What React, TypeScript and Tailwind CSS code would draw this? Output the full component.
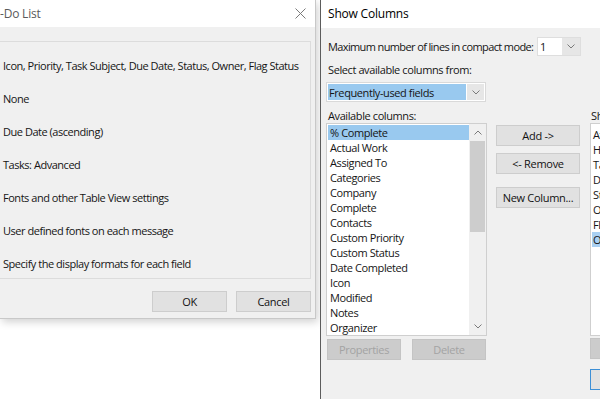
import React from "react";

function Chevron({ up = false }: { up?: boolean }) {
  return (
    <svg width="8" height="5" viewBox="0 0 8 5" className="block">
      <polyline
        points={up ? "0.5,4.5 4,1 7.5,4.5" : "0.5,0.5 4,4 7.5,0.5"}
        fill="none"
        stroke="#7a7a7a"
        strokeWidth="1"
      />
    </svg>
  );
}

function Btn({
  children,
  w,
  disabled = false,
  def = false,
}: {
  children: React.ReactNode;
  w: string;
  disabled?: boolean;
  def?: boolean;
}) {
  const base =
    "h-[21px] flex items-center justify-center text-[11px] leading-[15px] tracking-[-0.3px] shrink-0 whitespace-nowrap ";
  const look = disabled
    ? "bg-[#cccccc] border border-[#c4c4c4] text-[#a3a3a3]"
    : def
    ? "bg-[#e1e1e1] border border-[#3c8fd6] text-[#111111]"
    : "bg-[#e1e1e1] border border-[#cdcdcd] text-[#111111]";
  return <div className={base + look + " " + w}>{children}</div>;
}

const leftRows = [
  "Icon, Priority, Task Subject, Due Date, Status, Owner, Flag Status",
  "None",
  "Due Date (ascending)",
  "Tasks: Advanced",
  "Fonts and other Table View settings",
  "User defined fonts on each message",
  "Specify the display formats for each field",
];

const available = [
  "% Complete",
  "Actual Work",
  "Assigned To",
  "Categories",
  "Company",
  "Complete",
  "Contacts",
  "Custom Priority",
  "Custom Status",
  "Date Completed",
  "Icon",
  "Modified",
  "Notes",
  "Organizer",
];

const shown = [
  "Attachment",
  "Header Status",
  "Task Subject",
  "Due Date",
  "Status",
  "Owner",
  "Flag Status",
  "Organizer",
];

export default function App() {
  return (
    <div className="relative w-[600px] h-[399px] overflow-hidden bg-white font-['Open_Sans','Noto_Sans',sans-serif] text-[#151515]">
      {/* Left dialog */}
      <div className="absolute left-0 top-0 w-[316px] h-[319px] bg-[#f0f0f0] border-r border-b border-[#c8c8c8] shadow-[2px_3px_8px_rgba(0,0,0,0.18)] flex flex-col">
        <div className="h-[27px] bg-white flex items-center justify-between shrink-0">
          <span className="text-[12px] leading-[16px] text-[#5a5a5a] tracking-[-0.2px]">-Do List</span>
          <svg width="11" height="11" viewBox="0 0 11 11" className="mr-[9px]">
            <path d="M0.5 0.5 L10.5 10.5 M10.5 0.5 L0.5 10.5" stroke="#7a7a7a" strokeWidth="1" />
          </svg>
        </div>
        <div className="pt-[14px] flex flex-col">
          <div className="ml-[-1px] w-[312px] h-[238px] border border-[#dcdcdc] pt-[7px] flex flex-col">
            {leftRows.map((r) => (
              <div
                key={r}
                className="h-[33px] shrink-0 flex items-center pl-[3px] text-[11px] leading-[15px] tracking-[-0.47px] whitespace-nowrap"
              >
                {r}
              </div>
            ))}
          </div>
          <div className="mt-[12px] flex justify-end gap-[9px] pr-[4px]">
            <Btn w="w-[75px]">OK</Btn>
            <Btn w="w-[75px]">Cancel</Btn>
          </div>
        </div>
      </div>

      {/* Right dialog */}
      <div className="absolute left-[320px] top-0 w-[400px] h-[430px] bg-[#f0f0f0] border-l border-[#5c5c5c] flex flex-col">
        <div className="h-[28px] bg-white flex items-center pl-[7px] shrink-0 text-[12px] leading-[16px] text-black tracking-[-0.2px]">
          Show Columns
        </div>
        <div className="pl-[5px] pt-[8px] flex flex-col text-[11px] leading-[15px] tracking-[-0.4px]">
          <div className="h-[20px] flex items-center">
            <span className="w-[211px] pl-[2px] whitespace-nowrap tracking-[-0.62px]">
              Maximum number of lines in compact mode:
            </span>
            <div className="w-[44px] h-[19px] bg-white border border-[#dedede] flex items-stretch">
              <span className="flex-1 flex items-center pl-[2px]">1</span>
              <span className="w-[18px] bg-[#e6e6e6] flex items-center justify-center">
                <Chevron />
              </span>
            </div>
          </div>
          <div className="mt-[5px] h-[16px] flex items-center pl-[2px]">Select available columns from:</div>
          <div className="mt-[5px] w-[160px] h-[20px] bg-white border border-[#d9d9d9] flex items-stretch p-[1px]">
            <span className="w-[138px] bg-[#99c9ef] flex items-center pl-[1px] whitespace-nowrap">
              Frequently-used fields
            </span>
            <span className="flex-1 bg-[#e6e6e6] flex items-center justify-center ml-[1px]">
              <Chevron />
            </span>
          </div>

          <div className="mt-[5px] flex items-start">
            {/* left column */}
            <div className="w-[161px] flex flex-col shrink-0">
              <div className="h-[16px] flex items-center pl-[2px]">Available columns:</div>
              <div className="h-[213px] bg-white border border-[#cfcfcf] flex pt-[1px] pl-[1px]">
                <div className="flex-1 flex flex-col">
                  {available.map((a, i) => (
                    <div
                      key={a}
                      className={
                        "h-[15px] shrink-0 flex items-center pl-[2px] whitespace-nowrap " +
                        (i === 0 ? "bg-[#99c9ef]" : "")
                      }
                    >
                      {a}
                    </div>
                  ))}
                </div>
                <div className="w-[17px] bg-[#f0f0f0] flex flex-col items-center shrink-0 mt-[-1px]">
                  <div className="h-[17px] flex items-center justify-center">
                    <Chevron up />
                  </div>
                  <div className="w-[15px] h-[91px] bg-[#cdcdcd]" />
                  <div className="flex-1" />
                  <div className="h-[17px] flex items-center justify-center">
                    <Chevron />
                  </div>
                </div>
              </div>
              <div className="mt-[3px] flex gap-[11px] pl-[1px]">
                <Btn w="w-[74px]" disabled>
                  Properties
                </Btn>
                <Btn w="w-[74px]" disabled>
                  Delete
                </Btn>
              </div>
            </div>

            {/* middle column */}
            <div className="ml-[9px] w-[84px] pt-[18px] flex flex-col shrink-0">
              <Btn w="w-[84px]">Add -&gt;</Btn>
              <div className="mt-[7px]">
                <Btn w="w-[84px]">&lt;- Remove</Btn>
              </div>
              <div className="mt-[13px]">
                <Btn w="w-[84px]">New Column...</Btn>
              </div>
            </div>

            {/* right column */}
            <div className="ml-[10px] w-[160px] flex flex-col shrink-0">
              <div className="h-[16px] flex items-center pl-[1px] whitespace-nowrap">
                Show these columns in this order:
              </div>
              <div className="h-[213px] bg-white border border-[#cfcfcf] flex flex-col pt-[3px] pl-[1px]">
                {shown.map((s, i) => (
                  <div
                    key={s}
                    className={
                      "h-[15px] shrink-0 flex items-center pl-[1px] whitespace-nowrap " +
                      (i === shown.length - 1 ? "bg-[#a9d0f2]" : "")
                    }
                  >
                    {s}
                  </div>
                ))}
              </div>
              <div className="mt-[2px]">
                <Btn w="w-[75px]" disabled>
                  Move Up
                </Btn>
              </div>
              <div className="mt-[10px]">
                <Btn w="w-[75px]" def>
                  OK
                </Btn>
              </div>
            </div>
          </div>
        </div>
      </div>
    </div>
  );
}
